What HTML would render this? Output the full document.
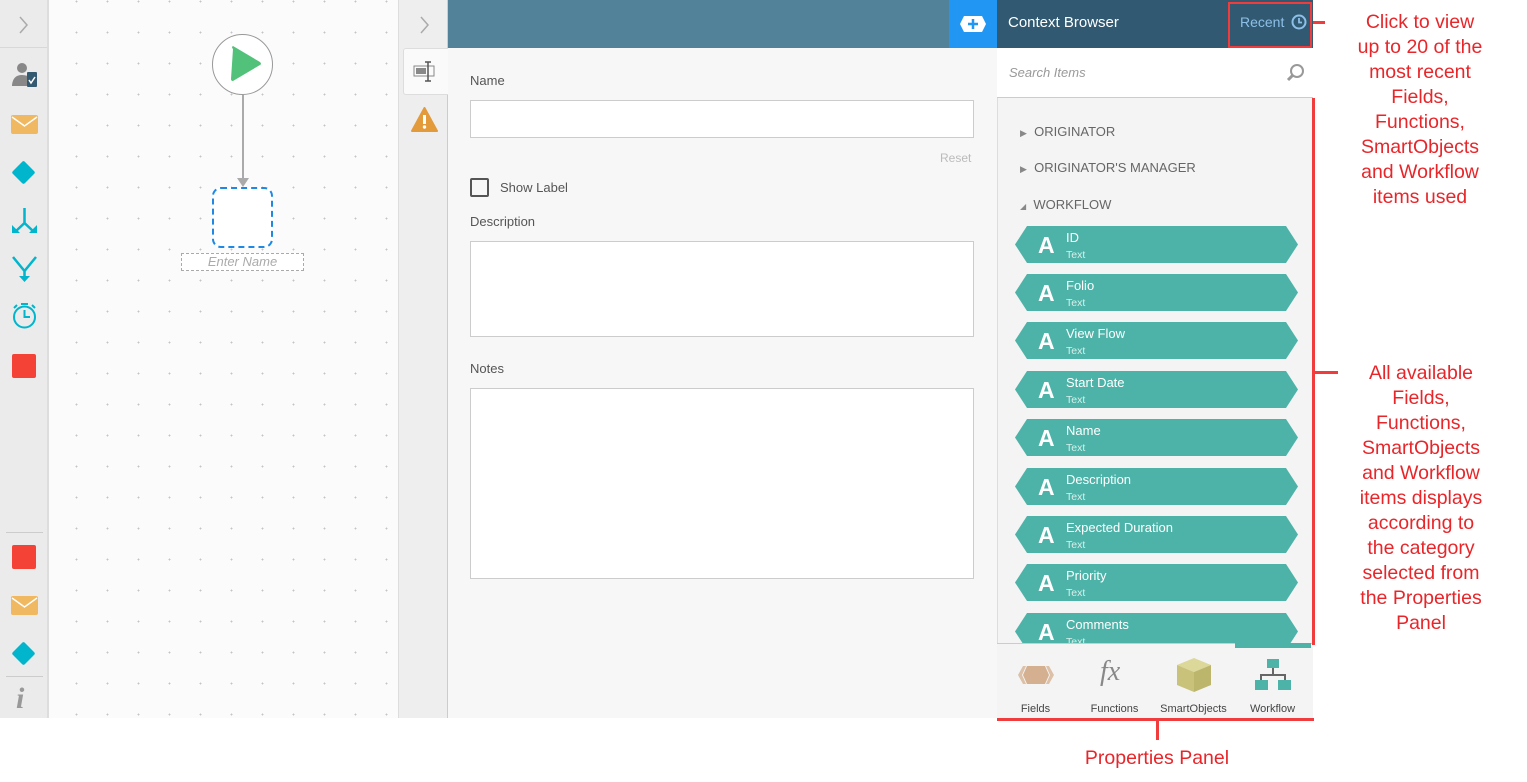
<!DOCTYPE html>
<html><head><meta charset="utf-8"><style>
*{margin:0;padding:0;box-sizing:border-box}
body{width:1527px;height:782px;background:#fff;position:relative;overflow:hidden;font-family:"Liberation Sans",sans-serif}
.a{position:absolute}
.lt{left:0;top:0;width:49px;height:718px;background:#ebebeb;border-right:2px solid #ddd}
.cv{left:49px;top:0;width:349px;height:718px;background-color:#fbfbfb;background-image:radial-gradient(#c4c4c4 0.8px,transparent 1px);background-size:31px 31px;background-position:12px 17px}
.np{left:398px;top:0;width:50px;height:718px;background:#eee;border-left:1px solid #ddd;border-right:1px solid #ccc}
.hd{left:448px;top:0;width:502px;height:48px;background:#52819a}
.form{left:448px;top:48px;width:549px;height:670px;background:#f7f7f7}
.lbl{font-size:13px;color:#555}
.inp{background:#fff;border:1px solid #ccc}
.rp{left:997px;top:48px;width:316px;height:670px;background:#f4f4f4;border-left:1px solid #ddd}
.item{left:1015px;width:283px;height:37px;background:#4db3a8;clip-path:polygon(12px 0,271px 0,283px 50%,271px 100%,12px 100%,0 50%)}
.item b{position:absolute;left:23px;top:6px;color:#fff;font-size:23px;font-weight:bold}
.item .n{position:absolute;left:51px;top:4px;color:#fff;font-size:13px}
.item .t{position:absolute;left:51px;top:23px;color:#d6f0ec;font-size:10.5px}
.cat{left:1020px;font-size:13px;color:#666}
.red{color:#e8262a;font-size:19.5px;text-align:center;line-height:25px;font-family:"Liberation Sans",sans-serif}
.rl{background:#f03c3c}
.tl{font-size:11px;color:#444;text-align:center;width:79px}
</style></head><body>
<div class="a lt"></div>
<div class="a" style="left:0;top:47px;width:47px;height:1px;background:#d8d8d8"></div>
<svg class="a" style="left:18px;top:15px" width="12" height="20"><path d="M2 2 L9 10 L2 18" stroke="#aaa" stroke-width="1.5" fill="none"/></svg>
<svg class="a" style="left:8px;top:60px" width="32" height="32"><circle cx="14" cy="8" r="5" fill="#888"/><path d="M4 25 Q5 15 14 15 Q20 15 21 18 L21 26 L4 26Z" fill="#888"/><rect x="19" y="12" width="10" height="15" rx="1" fill="#345a72"/><path d="M21 20 l2 3 l4 -6" stroke="#fff" stroke-width="1.5" fill="none"/></svg>
<svg class="a" style="left:11px;top:115px" width="27" height="20"><rect width="27" height="19" rx="2" fill="#f0b860"/><path d="M1 2 L13.5 11 L26 2" stroke="#fff" stroke-width="1.5" fill="none"/></svg>
<div class="a" style="left:15px;top:164px;width:17px;height:17px;background:#00b5cc;transform:rotate(45deg);border-radius:2px"></div>
<svg class="a" style="left:11px;top:207px" width="27" height="28"><path d="M13.5 1 V16 M13.5 16 L4 25 M13.5 16 L23 25" stroke="#00b5cc" stroke-width="2.5" fill="none"/><path d="M1 18 V26 H9Z M26 18 V26 H18Z" fill="#00b5cc"/></svg>
<svg class="a" style="left:11px;top:255px" width="27" height="28"><path d="M2 2 L13.5 16 L25 2 M13.5 16 V22" stroke="#00b5cc" stroke-width="2.5" fill="none"/><path d="M8 21 H19 L13.5 27Z" fill="#00b5cc"/></svg>
<svg class="a" style="left:11px;top:302px" width="27" height="28"><circle cx="13.5" cy="15" r="10.5" stroke="#00b5cc" stroke-width="2" fill="none"/><path d="M13.5 8 V15 H19 M10 2 H17 M3 6 L6 3 M24 6 L21 3" stroke="#00b5cc" stroke-width="2" fill="none"/></svg>
<div class="a" style="left:12px;top:354px;width:24px;height:24px;background:#f44336;border-radius:2px"></div>
<div class="a" style="left:6px;top:532px;width:37px;height:1px;background:#ccc"></div>
<div class="a" style="left:12px;top:545px;width:24px;height:24px;background:#f44336;border-radius:2px"></div>
<svg class="a" style="left:11px;top:596px" width="27" height="20"><rect width="27" height="19" rx="2" fill="#f0b860"/><path d="M1 2 L13.5 11 L26 2" stroke="#fff" stroke-width="1.5" fill="none"/></svg>
<div class="a" style="left:15px;top:645px;width:17px;height:17px;background:#00b5cc;transform:rotate(45deg);border-radius:2px"></div>
<div class="a" style="left:6px;top:676px;width:37px;height:1px;background:#ccc"></div>
<div class="a" style="left:16px;top:682px;color:#999;font-size:30px;font-style:italic;font-weight:bold;font-family:'Liberation Serif',serif">i</div>

<div class="a cv"></div>
<div class="a" style="left:212px;top:34px;width:61px;height:61px;border-radius:50%;border:1px solid #999;background:#fff"></div>
<svg class="a" style="left:229px;top:45px" width="34" height="38"><path d="M4 4 Q2 2 4 1 L31 17 Q33 19 31 20 L4 36 Q2 36 2 34Z" fill="#52c27a"/></svg>
<div class="a" style="left:242px;top:95px;width:2px;height:85px;background:#aaa"></div>
<div class="a" style="left:237px;top:178px;width:0;height:0;border-left:6px solid transparent;border-right:6px solid transparent;border-top:9px solid #aaa"></div>
<div class="a" style="left:212px;top:187px;width:61px;height:61px;border:2.5px dashed #1e88e5;border-radius:9px;background:#fff"></div>
<div class="a" style="left:181px;top:253px;width:123px;height:18px;border:1px dashed #aaa;background:#fff;color:#aaa;font-size:13px;font-style:italic;text-align:center;line-height:16px">Enter Name</div>

<div class="a np"></div>
<svg class="a" style="left:419px;top:15px" width="12" height="20"><path d="M2 2 L9 10 L2 18" stroke="#aaa" stroke-width="1.5" fill="none"/></svg>
<div class="a" style="left:403px;top:48px;width:46px;height:47px;background:#fafafa;border:1px solid #ddd;border-right:none;border-radius:3px 0 0 3px"></div>
<svg class="a" style="left:413px;top:61px" width="25" height="22"><rect x="1" y="5" width="20" height="10" fill="none" stroke="#888"/><rect x="3" y="7" width="10" height="6" fill="#888"/><path d="M15 1 V20 M12 1 H18 M12 20 H18" stroke="#555" stroke-width="1.5"/></svg>
<svg class="a" style="left:411px;top:107px" width="27" height="25"><path d="M13.5 1 L26 24 H1Z" fill="#e39a3b" stroke="#e39a3b" stroke-linejoin="round" stroke-width="2"/><rect x="12" y="8" width="3" height="9" fill="#fff"/><circle cx="13.5" cy="20" r="1.7" fill="#fff"/></svg>

<div class="a hd"></div>
<div class="a" style="left:949px;top:0;width:48px;height:48px;background:#2196f3"></div>
<svg class="a" style="left:959px;top:15px" width="28" height="18"><path d="M5 1 H23 L27 9 L23 17 H5 L1 9Z" fill="#fff"/><path d="M14 4 V14 M9 9 H19" stroke="#2196f3" stroke-width="2.5"/></svg>
<div class="a" style="left:997px;top:0;width:316px;height:48px;background:#315a72"></div>
<div class="a" style="left:1008px;top:14px;color:#fff;font-size:15px">Context Browser</div>
<div class="a" style="left:1240px;top:14px;color:#8ebfe8;font-size:14px">Recent</div>
<svg class="a" style="left:1291px;top:14px" width="16" height="16"><circle cx="8" cy="8" r="6.5" fill="none" stroke="#8ebfe8" stroke-width="2"/><path d="M8 4 V8.5 H11" stroke="#8ebfe8" stroke-width="1.8" fill="none"/></svg>
<div class="a" style="left:1228px;top:2px;width:84px;height:46px;border:2px solid #f03c3c"></div>

<div class="a form"></div>
<div class="a lbl" style="left:470px;top:73px">Name</div>
<div class="a inp" style="left:470px;top:100px;width:504px;height:38px"></div>
<div class="a" style="left:940px;top:151px;color:#bbb;font-size:12px">Reset</div>
<div class="a" style="left:470px;top:178px;width:19px;height:19px;border:2px solid #555;border-radius:2px"></div>
<div class="a lbl" style="left:500px;top:180px">Show Label</div>
<div class="a lbl" style="left:470px;top:214px">Description</div>
<div class="a inp" style="left:470px;top:241px;width:504px;height:96px"></div>
<div class="a lbl" style="left:470px;top:361px">Notes</div>
<div class="a inp" style="left:470px;top:388px;width:504px;height:191px"></div>

<div class="a rp"></div>
<div class="a" style="left:997px;top:48px;width:316px;height:50px;background:#fff;border-bottom:1px solid #ccc"></div>
<div class="a" style="left:1009px;top:65px;color:#999;font-size:13px;font-style:italic">Search Items</div>
<svg class="a" style="left:1286px;top:63px" width="20" height="20"><circle cx="11" cy="8" r="6" fill="none" stroke="#999" stroke-width="2"/><path d="M7 12 L2 17" stroke="#999" stroke-width="3"/></svg>
<div class="a cat" style="top:124px"><span style="font-size:9px;color:#888">&#9654;</span>&nbsp; ORIGINATOR</div>
<div class="a cat" style="top:160px"><span style="font-size:9px;color:#888">&#9654;</span>&nbsp; ORIGINATOR'S MANAGER</div>
<div class="a cat" style="top:197px"><span style="font-size:8px;color:#888">&#9698;</span>&nbsp; WORKFLOW</div>
<div style="position:absolute;left:0;top:0;width:1527px;height:643px;overflow:hidden">
<div class="a item" style="top:226px"><b>A</b><span class="n">ID</span><span class="t">Text</span></div>
<div class="a item" style="top:274px"><b>A</b><span class="n">Folio</span><span class="t">Text</span></div>
<div class="a item" style="top:322px"><b>A</b><span class="n">View Flow</span><span class="t">Text</span></div>
<div class="a item" style="top:371px"><b>A</b><span class="n">Start Date</span><span class="t">Text</span></div>
<div class="a item" style="top:419px"><b>A</b><span class="n">Name</span><span class="t">Text</span></div>
<div class="a item" style="top:468px"><b>A</b><span class="n">Description</span><span class="t">Text</span></div>
<div class="a item" style="top:516px"><b>A</b><span class="n">Expected Duration</span><span class="t">Text</span></div>
<div class="a item" style="top:564px"><b>A</b><span class="n">Priority</span><span class="t">Text</span></div>
<div class="a item" style="top:613px"><b>A</b><span class="n">Comments</span><span class="t">Text</span></div>
</div>
<div class="a" style="left:997px;top:643px;width:316px;height:75px;background:#f4f4f4;border-top:1px solid #ccc"></div>
<div class="a" style="left:1235px;top:643px;width:76px;height:5px;background:#4db3a8"></div>
<svg class="a" style="left:1017px;top:664px" width="38" height="22"><path d="M1 11 L6 2 H9 L5 11 L9 20 H6Z M37 11 L32 2 H29 L33 11 L29 20 H32Z" fill="#dcc0a8"/><path d="M10 2 H28 L32 11 L28 20 H10 L6 11Z" fill="#d4b090"/></svg>
<div class="a" style="left:1100px;top:656px;color:#888;font-size:28px;font-style:italic;font-family:'Liberation Serif',serif">fx</div>
<svg class="a" style="left:1176px;top:657px" width="36" height="36"><path d="M18 1 L35 8 L18 15 L1 8Z" fill="#dcd89a"/><path d="M1 8 L18 15 V35 L1 28Z" fill="#c8c27a"/><path d="M35 8 L18 15 V35 L35 28Z" fill="#bcb56c"/></svg>
<svg class="a" style="left:1255px;top:658px" width="36" height="34"><rect x="12" y="1" width="12" height="9" fill="#4db3a8"/><path d="M18 10 V17 M6 22 V17 H30 V22" stroke="#666" stroke-width="2" fill="none"/><rect x="0" y="22" width="13" height="10" fill="#4db3a8"/><rect x="23" y="22" width="13" height="10" fill="#4db3a8"/></svg>
<div class="a tl" style="left:996px;top:703px">Fields</div>
<div class="a tl" style="left:1075px;top:703px">Functions</div>
<div class="a tl" style="left:1154px;top:703px">SmartObjects</div>
<div class="a tl" style="left:1233px;top:703px">Workflow</div>

<div class="a rl" style="left:1313px;top:21px;width:12px;height:3px"></div>
<div class="a rl" style="left:1312px;top:98px;width:3px;height:547px"></div>
<div class="a rl" style="left:1313px;top:371px;width:25px;height:3px"></div>
<div class="a rl" style="left:997px;top:718px;width:317px;height:3px"></div>
<div class="a rl" style="left:1156px;top:718px;width:3px;height:22px"></div>
<div class="a red" style="left:1330px;top:10px;width:180px">Click to view<br>up to 20 of the<br>most recent<br>Fields,<br>Functions,<br>SmartObjects<br>and Workflow<br>items used</div>
<div class="a red" style="left:1330px;top:361px;width:182px">All available<br>Fields,<br>Functions,<br>SmartObjects<br>and Workflow<br>items displays<br>according to<br>the category<br>selected from<br>the Properties<br>Panel</div>
<div class="a red" style="left:1057px;top:746px;width:200px">Properties Panel</div>
</body></html>
